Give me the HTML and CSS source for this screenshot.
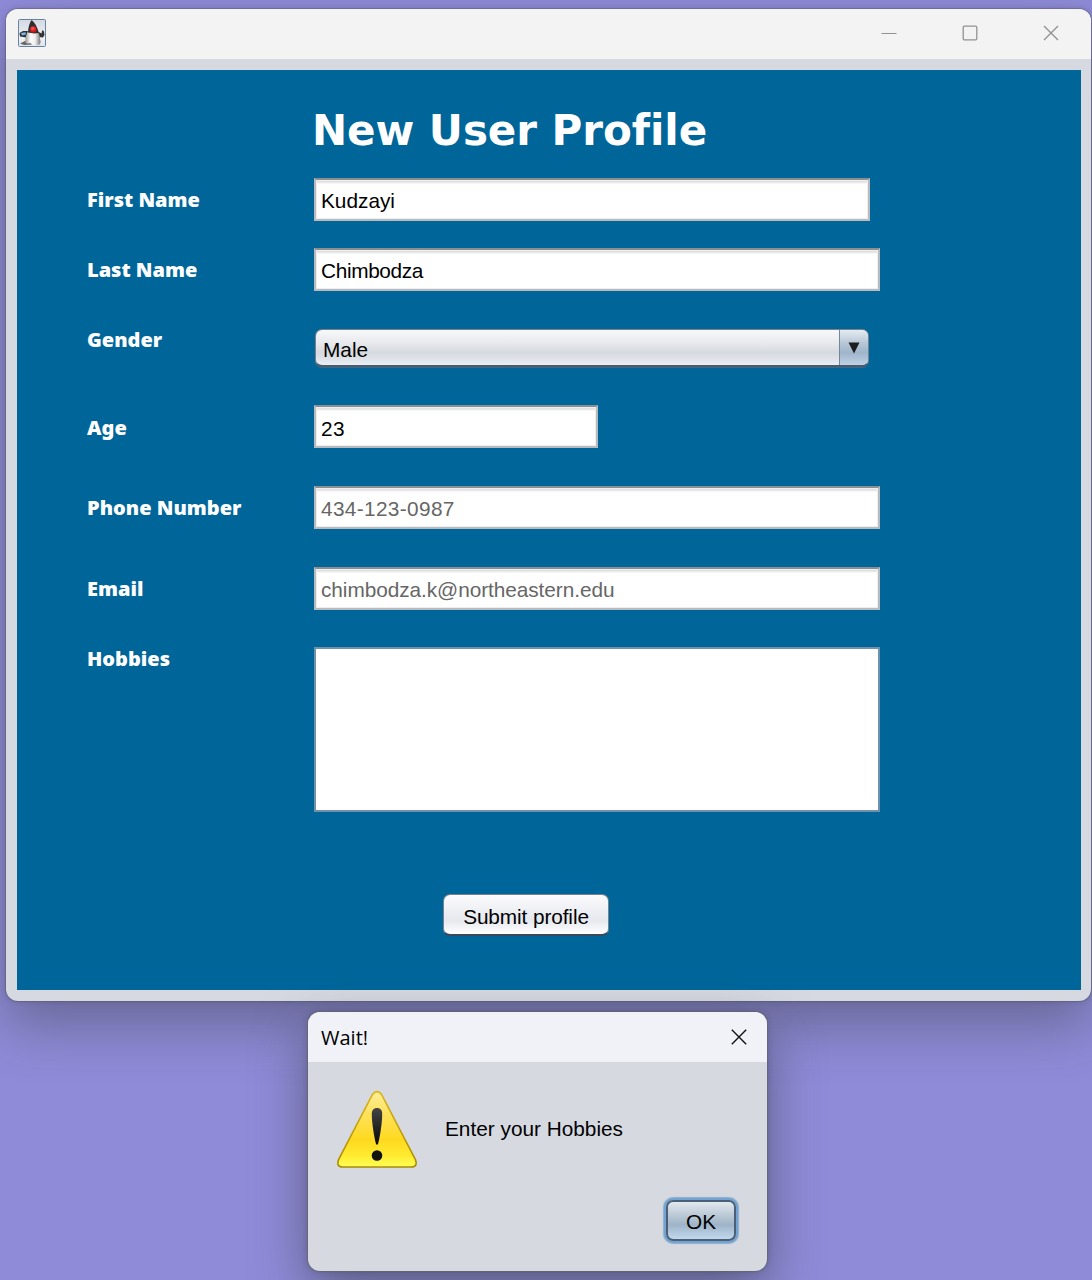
FILE: index.html
```html
<!DOCTYPE html>
<html lang="en">
<head>
<meta charset="utf-8">
<title>New User Profile</title>
<link rel="stylesheet" href="styles.css">
</head>
<body>
<main class="desktop">
  <section class="window">
    <header class="titlebar">
      <svg class="app-icon" width="28" height="28" viewBox="0 0 28 28">
        <defs>
          <linearGradient id="tile" x1="0" y1="0" x2="0" y2="1"><stop offset="0" stop-color="#d4d8e2"/><stop offset=".7" stop-color="#f0f1f5"/><stop offset="1" stop-color="#dfe3ea"/></linearGradient>
          <linearGradient id="belly" x1="0" y1="0" x2="1" y2="0"><stop offset="0" stop-color="#999"/><stop offset=".35" stop-color="#fff"/><stop offset=".65" stop-color="#eee"/><stop offset="1" stop-color="#777"/></linearGradient>
          <radialGradient id="nose" cx=".4" cy=".35"><stop offset="0" stop-color="#ff5a52"/><stop offset="1" stop-color="#d0141c"/></radialGradient>
        </defs>
        <rect x=".5" y=".5" width="27" height="27" rx="1" fill="url(#tile)" stroke="#66839f"/>
        <path d="M2 24.5 9 21 14 25.5 6 26Z" fill="#666"/>
        <path d="M11 12 5 12 1.5 14 2 17.5 8 18.5Z" fill="#333"/>
        <path d="M3 14 7.5 13.2 8 15.6 4 16.6Z" fill="#79b8e8"/>
        <path d="M19 12 23.5 14.5 24.3 11 26 12.5 26.5 16 25 18.5 20 18Z" fill="#333"/>
        <path d="M10 12Q6.5 19 7.5 24Q11 25 13 23.5L15 26H21Q23.5 24 22 20Q22 15 19 12Z" fill="url(#belly)"/>
        <path d="M13.5 1Q18.5 4.5 20.8 14L16 14.5 10 13.5Q10.5 5 13.5 1Z" fill="#303030"/>
        <circle cx="15.3" cy="10.4" r="3.2" fill="url(#nose)"/>
      </svg>
      <div class="controls">
        <svg width="16" height="16" viewBox="0 0 16 16"><path d="M.5 8.5h15" stroke="#929292"/></svg>
        <svg width="16" height="16" viewBox="0 0 16 16"><rect x="1.2" y="1.2" width="13.6" height="13.6" rx="1.2" fill="none" stroke="#929292" stroke-width="1.3"/></svg>
        <svg width="16" height="16" viewBox="0 0 16 16"><path d="M1 1 15 15M15 1 1 15" stroke="#929292" stroke-width="1.4"/></svg>
      </div>
    </header>
    <form class="panel">
      <h1 class="title">New User Profile</h1>
      <div class="row"><span class="label">First Name</span><div class="field field-first">Kudzayi</div></div>
      <div class="row row-last"><span class="label">Last Name</span><div class="field tight">Chimbodza</div></div>
      <div class="row row-gender"><span class="label">Gender</span>
        <div class="combo"><span class="combo-value">Male</span><span class="combo-arrow"><svg width="12" height="12" viewBox="0 0 12 12"><path d="M.5.5h11L6 11.5Z" fill="#1c1e20"/></svg></span></div>
      </div>
      <div class="row row-age"><span class="label">Age</span><div class="field field-age digits">23</div></div>
      <div class="row row-wide"><span class="label">Phone Number</span><div class="field muted digits">434-123-0987</div></div>
      <div class="row row-wide"><span class="label">Email</span><div class="field muted email">chimbodza.k@northeastern.edu</div></div>
      <div class="row row-hobbies"><span class="label">Hobbies</span><div class="area"></div></div>
      <button class="submit" type="button">Submit profile</button>
    </form>
  </section>

  <section class="dialog">
    <header class="dialog-bar">
      <span class="dialog-title">Wait!</span>
      <svg width="16" height="16" viewBox="0 0 16 16"><path d="M.8.8 15.2 15.2M15.2.8.8 15.2" stroke="#111" stroke-width="1.4"/></svg>
    </header>
    <div class="dialog-body">
      <svg class="warning" width="82" height="78" viewBox="0 0 82 78">
        <defs>
          <linearGradient id="sign" x1="0" y1="0" x2="0" y2="1"><stop offset="0" stop-color="#ffed98"/><stop offset=".3" stop-color="#fee15b"/><stop offset=".64" stop-color="#ffd91f"/><stop offset=".85" stop-color="#ffeb30"/><stop offset="1" stop-color="#ffff55"/></linearGradient>
          <linearGradient id="rim" x1="0" y1="0" x2="0" y2="1"><stop offset="0" stop-color="#dbb514"/><stop offset="1" stop-color="#a88c04"/></linearGradient>
          <linearGradient id="mark" x1="0" y1="0" x2="0" y2="1"><stop offset="0" stop-color="#444"/><stop offset="1" stop-color="#080808"/></linearGradient>
        </defs>
        <path d="M36.6 4.2Q41-.9 45.4 4.2L79.3 69.4Q82.3 76.8 75.2 77H6.8Q-.3 76.8 2.7 69.4Z" fill="url(#sign)" stroke="url(#rim)" stroke-width="1.6"/>
        <path d="M35.8 23.4C35.8 16.2 46.2 16.2 46.2 23.4 46.2 33 44 46 42.2 53.3Q41 56.3 39.8 53.3C38 46 35.8 33 35.8 23.4Z" fill="url(#mark)"/>
        <circle cx="41" cy="65.5" r="5.3" fill="#111"/>
      </svg>
      <p class="message">Enter your Hobbies</p>
      <button class="ok" type="button">OK</button>
    </div>
  </section>
</main>
</body>
</html>
```
FILE: styles.css
```css
* { box-sizing: border-box; }

body {
  margin: 0;
  font: 20.8px/24px "Liberation Sans", Arial, sans-serif;
  color: #000;
}

.desktop {
  position: relative;
  width: 1092px;
  height: 1280px;
  overflow: hidden;
  background: #8f8bd8;
}

.window {
  position: absolute;
  left: 6px;
  top: 9px;
  width: 1085px;
  height: 992px;
  border-radius: 12px;
  overflow: hidden;
  background: #d6d9e0;
  box-shadow: 0 0 0 1px rgba(90, 90, 105, .4), 0 24px 54px rgba(50, 55, 60, .42), 0 0 5px rgba(50, 50, 80, .3);
}

.titlebar {
  display: flex;
  justify-content: space-between;
  align-items: center;
  height: 50px;
  padding: 0 32.5px 1.5px 12px;
  background: #f3f3f3;
}

.controls { display: flex; gap: 65px; }
.titlebar svg, .dialog svg { display: block; }

.panel {
  display: flex;
  flex-direction: column;
  width: 1064px;
  height: 920px;
  margin: 11px 0 0 11px;
  padding: 37px 0 0 70px;
  background: #00669a;
}

.title {
  height: 48px;
  margin: 0 0 23px 225px;
  font: bold 42px/48px "DejaVu Sans", Verdana, sans-serif;
  font-variant-ligatures: none;
  letter-spacing: -.05px;
  color: #fff;
  white-space: nowrap;
}

.row { display: flex; align-items: flex-start; }
.row-last { margin-top: 27px; }
.row-gender { margin-top: 38px; }
.row-age { margin-top: 38px; }
.row-wide { margin-top: 38px; }
.row-hobbies { margin-top: 37px; }

.label {
  flex: 0 0 227px;
  font: 900 20px/44px "Noto Sans", "Open Sans", sans-serif;
  color: #fff;
  white-space: nowrap;
}

.row-gender .label { line-height: 22px; }
.row-age .label { height: 43px; line-height: 46px; }
.row .label { max-height: 43px; }
.row-hobbies .label { line-height: 24px; }

.field {
  width: 566px;
  height: 43px;
  padding: 0 5px;
  line-height: 41px;
  border: 2px solid #b8babd;
  border-top-color: #8c8f92;
  background: linear-gradient(#d5d5d5, #ededed 3px, #fff 4px);
  box-shadow: inset 0 0 0 1px #eee;
  white-space: nowrap;
}

.field-first { width: 556px; }
.field-age { width: 284px; line-height: 43px; }
.muted { color: #666; }
.tight { letter-spacing: -.35px; }
.digits { letter-spacing: .35px; }
.email { letter-spacing: -.06px; }

.combo {
  display: flex;
  width: 554px;
  height: 38px;
  margin-left: 1px;
  overflow: hidden;
  border: 1px solid #75818d;
  border-bottom: 2px solid #4e5a65;
  border-radius: 7px;
  background: linear-gradient(#f8f8fa, #e6e8eb 40%, #d6d9de 65%, #e9edf5);
  box-shadow: 0 1px 1px rgba(80, 110, 140, .7);
}

.combo-value { flex: 1; padding-left: 7px; line-height: 40px; }

.combo-arrow {
  display: flex;
  justify-content: center;
  align-items: center;
  width: 29px;
  padding-top: 1px;
  border-left: 1px solid #74879a;
  background: linear-gradient(#e5ebf1, #b5c5d5 40%, #9fb5ca 65%, #bdd2e7);
}

.area {
  width: 566px;
  height: 165px;
  border: 2px solid #6f91ad;
  background: #fff;
}

button {
  padding: 0;
  font: inherit;
  color: #000;
}

.submit {
  width: 166px;
  height: 42px;
  margin: 82px 0 0 356px;
  border: 1px solid #76818b;
  border-bottom: 2px solid #3d4a55;
  border-radius: 7px;
  background: linear-gradient(#fbfbfd, #f0f1f5 35%, #e6e8ee 65%, #fff);
  padding-top: 4px;
  letter-spacing: -.1px;
}

.dialog {
  position: absolute;
  left: 308px;
  top: 1012px;
  width: 459px;
  height: 259px;
  overflow: hidden;
  border-radius: 12px;
  background: #d6d9e0;
  box-shadow: 0 0 0 1px rgba(100, 100, 105, .65), 0 20px 52px rgba(50, 55, 60, .55), 0 0 6px rgba(50, 50, 80, .3);
}

.dialog-bar {
  display: flex;
  align-items: center;
  justify-content: space-between;
  height: 50px;
  padding: 0 20.5px 0 13px;
  background: #f1f2f8;
}

.dialog-title { padding-top: 2px; font: 20px/28px "Open Sans", "Noto Sans", sans-serif; }

.dialog-body {
  display: grid;
  grid-template-columns: 109px 1fr;
  grid-template-rows: 107px 46px;
  padding: 28px 28px 0;
}

.message { margin: 27px 0 0; }

.ok {
  grid-column: 2;
  justify-self: end;
  width: 70px;
  height: 41px;
  margin: 3px 3px 0 0;
  padding-top: 2px;
  border: 2px solid #4b6076;
  border-radius: 7px;
  background: linear-gradient(#e2e8ee, #b4c4d2 42%, #9fb4c8 62%, #c2d8ed);
  box-shadow: 0 0 0 2px #73a4d1, 0 0 1px 3px #8cb0d0;
}
```
